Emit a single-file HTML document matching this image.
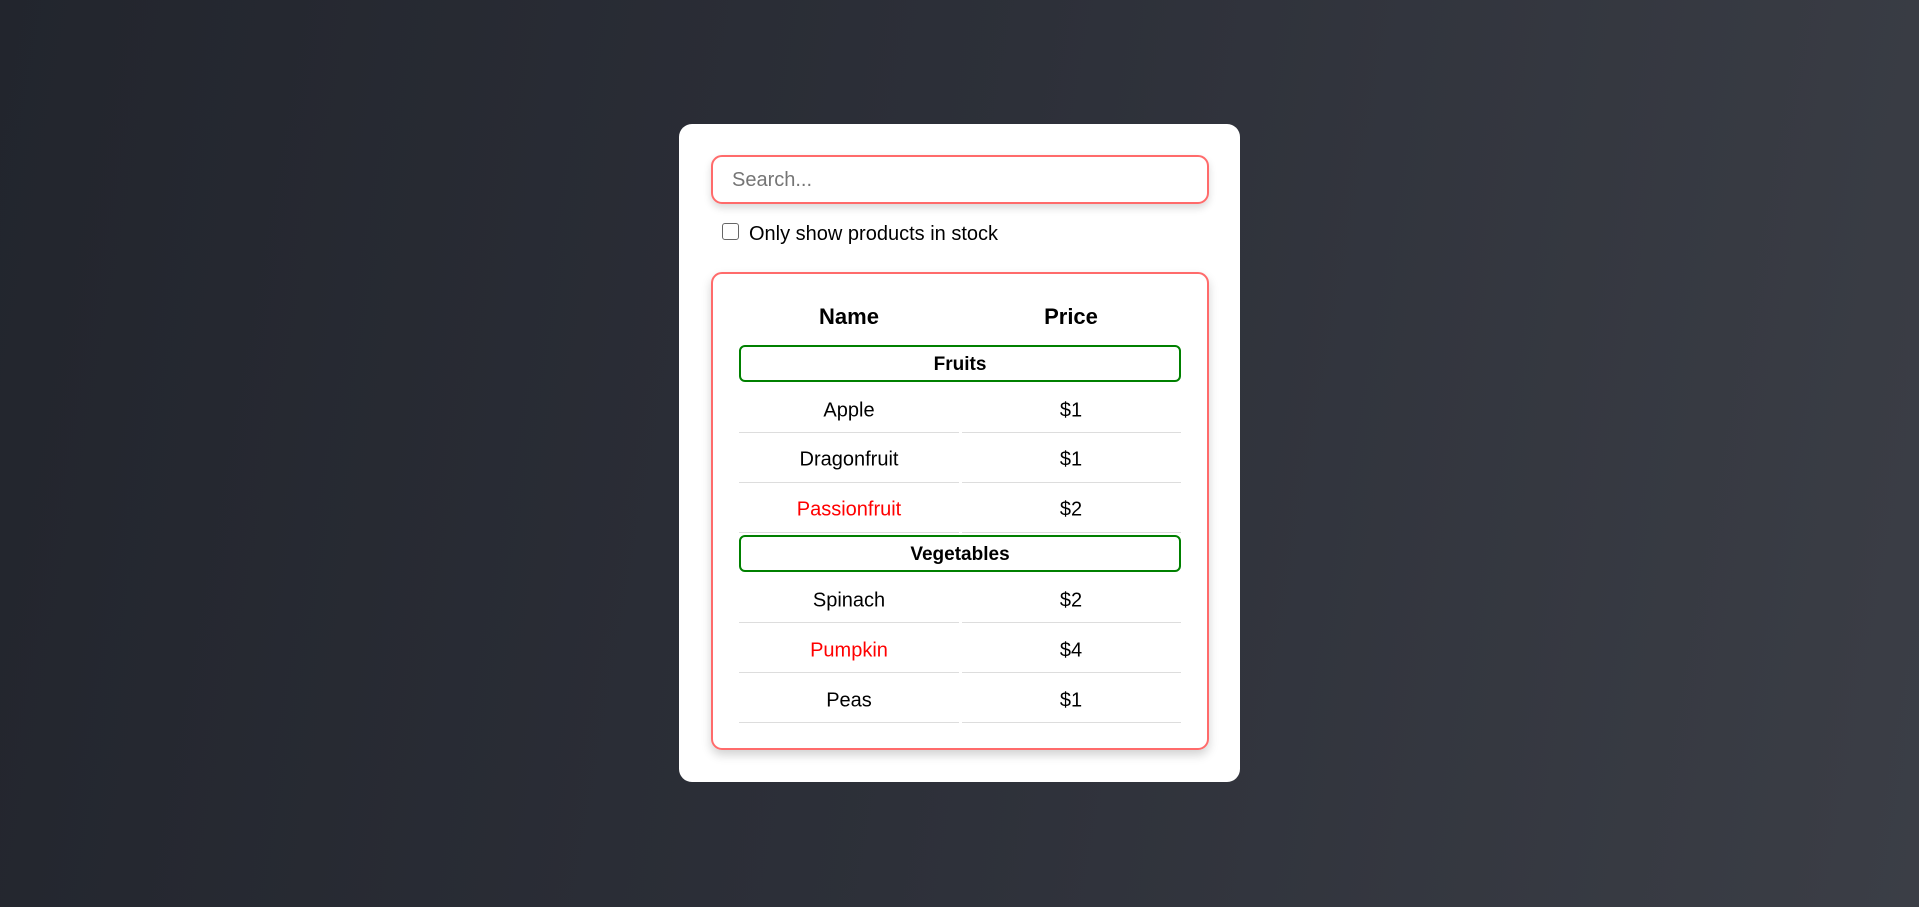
<!DOCTYPE html>
<html><head><style>
*{margin:0;padding:0;box-sizing:border-box}
body{width:1919px;height:907px;overflow:hidden;background:linear-gradient(100deg,#22252d 0%,#2d3039 50%,#3b3e46 100%);font-family:"Liberation Sans",sans-serif;position:relative}
.card{position:absolute;left:679px;top:124px;width:561px;height:658px;background:#fff;border-radius:13px}
.search{position:absolute;left:711px;top:155px;width:498px;height:49px;border:2px solid #ff6b6b;border-radius:11px;box-shadow:0 4px 8px rgba(0,0,0,.15);font-size:20px;color:#757575;padding:12px 0 0 19px}
.cb{position:absolute;left:722px;top:223px;width:17px;height:17px;border:1.5px solid #666;border-radius:3px}
.lbl{position:absolute;left:749px;top:223px;font-size:20px;color:#000}
.tbl{position:absolute;left:711px;top:272px;width:498px;height:478px;border:2px solid #ff6b6b;border-radius:11px;box-shadow:0 5px 10px rgba(0,0,0,.18)}
.t{position:absolute;font-size:20px;transform:translate(-50%,-50%);white-space:nowrap;margin-top:1px}
.h{font-weight:bold;font-size:22px}
.cat{position:absolute;left:739px;width:442px;height:37px;border:2px solid #008000;border-radius:6px;font-weight:bold;font-size:19px;text-align:center;line-height:36px}
.ln{position:absolute;height:1px;background:#ddd}
.red{color:#f00}
</style></head><body>
<div class="card"></div>
<div class="search">Search...</div>
<div class="cb"></div>
<div class="lbl">Only show products in stock</div>
<div class="tbl"></div>
<div class="t h" style="left:849px;top:316px">Name</div>
<div class="t h" style="left:1071px;top:316px">Price</div>
<div class="cat" style="top:345px">Fruits</div>
<div class="t" style="left:849px;top:410px">Apple</div><div class="t" style="left:1071px;top:410px">$1</div>
<div class="ln" style="left:739px;width:220px;top:432px"></div><div class="ln" style="left:962px;width:219px;top:432px"></div>
<div class="t" style="left:849px;top:459px">Dragonfruit</div><div class="t" style="left:1071px;top:459px">$1</div>
<div class="ln" style="left:739px;width:220px;top:482px"></div><div class="ln" style="left:962px;width:219px;top:482px"></div>
<div class="t red" style="left:849px;top:509px">Passionfruit</div><div class="t" style="left:1071px;top:509px">$2</div>
<div class="ln" style="left:739px;width:220px;top:532px"></div><div class="ln" style="left:962px;width:219px;top:532px"></div>
<div class="cat" style="top:535px">Vegetables</div>
<div class="t" style="left:849px;top:600px">Spinach</div><div class="t" style="left:1071px;top:600px">$2</div>
<div class="ln" style="left:739px;width:220px;top:622px"></div><div class="ln" style="left:962px;width:219px;top:622px"></div>
<div class="t red" style="left:849px;top:650px">Pumpkin</div><div class="t" style="left:1071px;top:650px">$4</div>
<div class="ln" style="left:739px;width:220px;top:672px"></div><div class="ln" style="left:962px;width:219px;top:672px"></div>
<div class="t" style="left:849px;top:700px">Peas</div><div class="t" style="left:1071px;top:700px">$1</div>
<div class="ln" style="left:739px;width:220px;top:722px"></div><div class="ln" style="left:962px;width:219px;top:722px"></div>
</body></html>
